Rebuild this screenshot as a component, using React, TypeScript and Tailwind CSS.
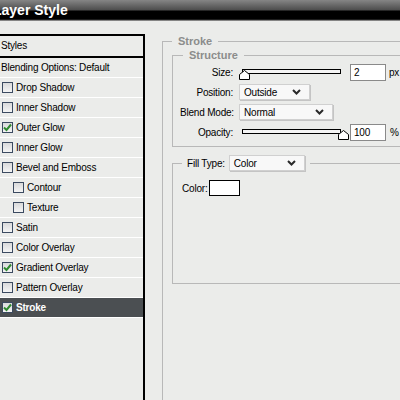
import React from "react";

const styles = [
  { label: "Drop Shadow", checked: false },
  { label: "Inner Shadow", checked: false },
  { label: "Outer Glow", checked: true },
  { label: "Inner Glow", checked: false },
  { label: "Bevel and Emboss", checked: false },
  { label: "Contour", checked: false, indent: true },
  { label: "Texture", checked: false, indent: true },
  { label: "Satin", checked: false },
  { label: "Color Overlay", checked: false },
  { label: "Gradient Overlay", checked: true },
  { label: "Pattern Overlay", checked: false },
  { label: "Stroke", checked: true, selected: true },
];

const Check = ({ checked }: { checked: boolean }) => (
  <span className="w-[11px] h-[11px] border border-[#3b4a60] bg-[linear-gradient(to_bottom,#d9dadb,#f4f4f4)] flex items-center justify-center shrink-0">
    {checked && (
      <svg width="9" height="9" viewBox="0 0 9 9">
        <path d="M1 4.5 L3.5 7 L8 1.5" fill="none" stroke="#2f8a2f" strokeWidth="2" />
      </svg>
    )}
  </span>
);

const Chevron = () => (
  <svg width="9" height="6" viewBox="0 0 9 6">
    <path d="M1 1 L4.5 4.5 L8 1" fill="none" stroke="#2a2a2a" strokeWidth="2" />
  </svg>
);

const Select = ({ value, width }: { value: string; width: string }) => (
  <div
    className={`${width} h-[16px] bg-[#f8f8f8] border border-[#d0d0d0] shadow-[1px_1px_0_#c4c4c4] flex items-center justify-between pl-[4px] pr-[8px]`}
  >
    <span>{value}</span>
    <Chevron />
  </div>
);

const Slider = ({ at }: { at: "left" | "right" }) => (
  <div className="relative w-[110px] h-[17px]">
    <div className="absolute left-[3px] top-[5px] w-[99px] h-[5px] border border-black bg-[#f4f4f4]" />
    <svg
      width="11"
      height="10"
      viewBox="0 0 11 10"
      className={`absolute top-[6px] ${at === "left" ? "left-0" : "left-[99px]"}`}
    >
      <polygon points="0.5,9.5 0.5,4.5 5.5,0.5 10.5,4.5 10.5,9.5" fill="#fff" stroke="#000" />
    </svg>
  </div>
);

const Row = ({ label, children }: { label: string; children: React.ReactNode }) => (
  <div className="h-[20px] flex items-center">
    <span className="w-[53px] text-right whitespace-nowrap">{label}</span>
    <div className="ml-[6px] flex items-center">{children}</div>
  </div>
);

export default function App() {
  return (
    <div
      className="w-[400px] h-[400px] overflow-hidden bg-[#ebecea] text-[10px] text-black tracking-[-0.2px]"
      style={{ fontFamily: '"Liberation Sans", Arial, sans-serif' }}
    >
      <div className="h-[21px] bg-[linear-gradient(to_bottom,#858585_0px,#4d4d4d_10px,#000_11px,#000_19px,#3a3a3a_20px,#cfcfcf_21px)] overflow-hidden">
        <div className="ml-[-7px] text-[14px] font-bold text-white leading-[20px] tracking-normal">
          Layer Style
        </div>
      </div>

      <div className="flex h-[379px]">
        <div className="w-[145px] mt-[13px] border-r-2 border-black shrink-0">
          <div className="border-t-2 border-black h-[21px] flex items-center pl-[1px]">Styles</div>
          <div className="border-b border-black h-[3px] mt-[-1px]" />
          <div className="border-t border-black h-[21px] mt-[0px] flex items-center pl-[1px] border-b border-b-white">
            Blending Options: Default
          </div>
          {styles.map((s, i) => (
            <div
              key={i}
              className={`h-[20px] flex items-center border-b ${
                s.selected ? "bg-[#4b4f52] text-white font-bold border-white" : "border-white"
              } ${s.indent ? "pl-[13px]" : "pl-[2px]"}`}
            >
              <Check checked={s.checked} />
              <span className="ml-[3px]">{s.label}</span>
            </div>
          ))}
        </div>

        <div className="flex-1 pl-[17px] pt-[14px]">
          <fieldset className="w-[260px] h-[400px] border border-[#b8b8b8] pl-[9px] pt-[2px]">
            <legend className="px-[6px] text-[11px] font-bold text-[#8c8c8c] leading-[12px] tracking-normal">
              Stroke
            </legend>

            <fieldset className="w-[250px] border border-[#b8b8b8] pl-[7px] pt-[1px] pb-[4px]">
              <legend className="ml-[3px] px-[6px] text-[11px] font-bold text-[#8c8c8c] leading-[12px] tracking-normal">
                Structure
              </legend>
              <Row label="Size:">
                <Slider at="left" />
                <div className="ml-[1px] w-[36px] h-[17px] border border-[#8a8a8a] bg-white flex items-center pl-[3px]">2</div>
                <span className="ml-[3px]">px</span>
              </Row>
              <Row label="Position:">
                <Select value="Outside" width="w-[71px]" />
              </Row>
              <Row label="Blend Mode:">
                <Select value="Normal" width="w-[94px]" />
              </Row>
              <Row label="Opacity:">
                <Slider at="right" />
                <div className="ml-[1px] w-[36px] h-[17px] border border-[#8a8a8a] bg-white flex items-center pl-[3px]">100</div>
                <span className="ml-[4px]">%</span>
              </Row>
            </fieldset>

            <fieldset className="w-[250px] h-[129px] mt-[8px] border border-[#b8b8b8] pl-[9px] pt-[9px]">
              <legend className="px-[5px]">
                <div className="flex items-center">
                  <span>Fill Type:</span>
                  <div className="ml-[4px]">
                    <Select value="Color" width="w-[76px]" />
                  </div>
                </div>
              </legend>
              <div className="flex items-center">
                <span>Color:</span>
                <div className="ml-[2px] w-[31px] h-[16px] border border-black bg-white" />
              </div>
            </fieldset>
          </fieldset>
        </div>
      </div>
    </div>
  );
}
